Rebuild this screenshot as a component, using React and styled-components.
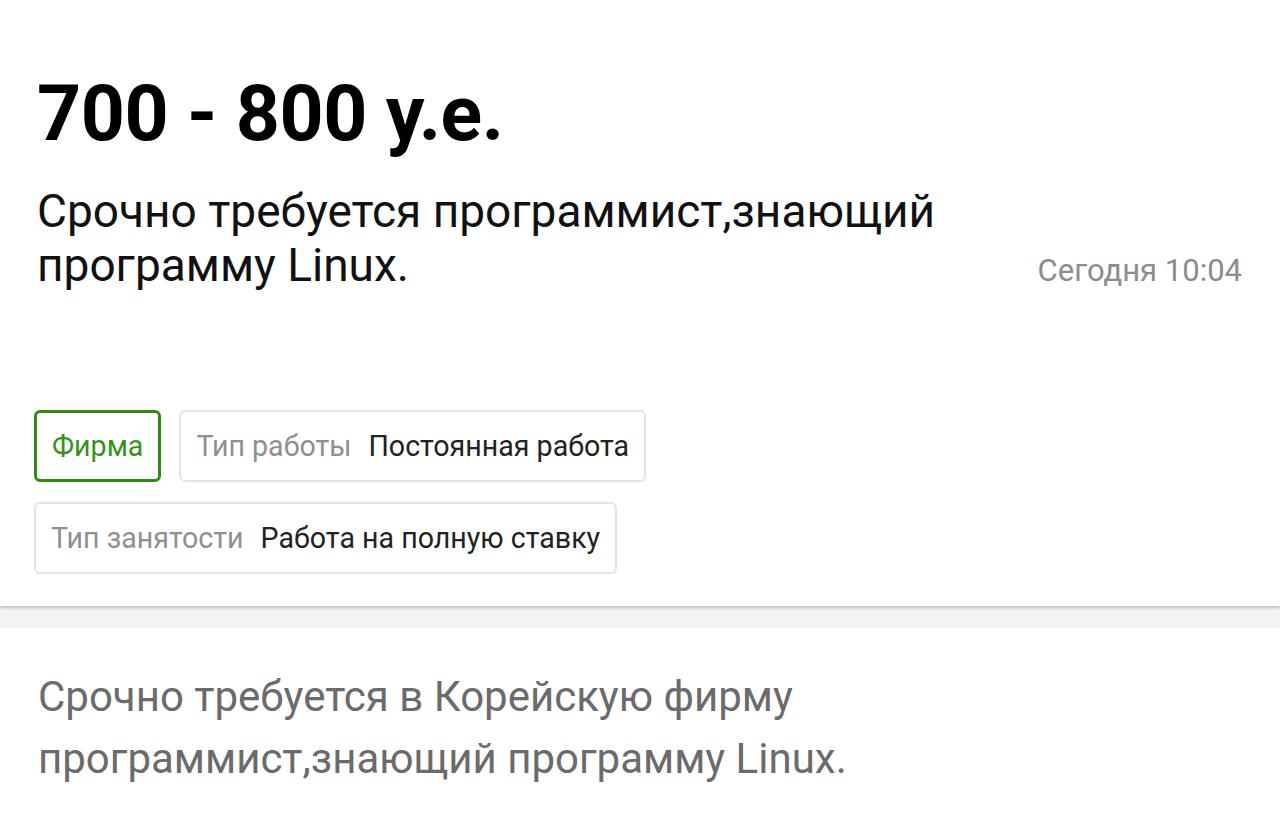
import styled, { createGlobalStyle } from "styled-components";

const GlobalStyle = createGlobalStyle`
  html, body {
    margin: 0;
    padding: 0;
    background: #ffffff;
    font-family: Roboto, "Noto Sans", "Liberation Sans", sans-serif;
  }
`;

const Page = styled.div`
  width: 1280px;
  min-height: 817px;
  background: #ffffff;
  overflow: hidden;
`;

const Card = styled.section`
  background: #ffffff;
  padding: 76px 38px 32px 37px;
  box-shadow: 0 2px 3px rgba(0, 0, 0, 0.22);
  position: relative;
  z-index: 1;
`;

const Price = styled.h1`
  margin: 0;
  font-size: 77px;
  line-height: 77px;
  font-weight: 700;
  letter-spacing: -0.4px;
  color: #000000;
`;

const TitleRow = styled.div`
  display: flex;
  justify-content: space-between;
  align-items: last baseline;
  margin-top: 31px;
`;

const Subtitle = styled.h2`
  margin: 0;
  max-width: 960px;
  font-size: 46px;
  line-height: 54px;
  font-weight: 400;
  color: #111111;
`;

const Posted = styled.span`
  font-size: 31px;
  color: #8c8c8c;
  white-space: nowrap;
`;

const Tags = styled.div`
  display: flex;
  flex-wrap: wrap;
  gap: 20px 18px;
  margin-top: 118px;
  margin-left: -3px;
  max-width: 640px;
`;

const Tag = styled.div`
  box-sizing: border-box;
  height: 72px;
  display: flex;
  align-items: center;
  gap: 17px;
  padding: 0 15px;
  border-radius: 6px;
  border: ${(p) => (p.accent ? "3px solid #2f8a12" : "2px solid #e4e4e4")};
  color: ${(p) => (p.accent ? "#35921a" : "#222222")};
  font-size: 28.6px;
  white-space: nowrap;
`;

const TagLabel = styled.span`
  color: #8f8f8f;
`;

const Band = styled.div`
  height: 22px;
  background: #f4f4f4;
`;

const Description = styled.p`
  margin: 0;
  padding: 38px 38px 0 38px;
  max-width: 820px;
  font-size: 42px;
  line-height: 62px;
  color: #6b6b6b;
`;

export default function App() {
  return (
    <Page>
      <GlobalStyle />
      <Card>
        <Price>700 - 800 у.е.</Price>
        <TitleRow>
          <Subtitle>
            Срочно требуется программист,знающий программу Linux.
          </Subtitle>
          <Posted>Сегодня 10:04</Posted>
        </TitleRow>
        <Tags>
          <Tag accent>Фирма</Tag>
          <Tag>
            <TagLabel>Тип работы</TagLabel>
            <span>Постоянная работа</span>
          </Tag>
          <Tag>
            <TagLabel>Тип занятости</TagLabel>
            <span>Работа на полную ставку</span>
          </Tag>
        </Tags>
      </Card>
      <Band />
      <Description>
        Срочно требуется в Корейскую фирму программист,знающий программу Linux.
      </Description>
    </Page>
  );
}
